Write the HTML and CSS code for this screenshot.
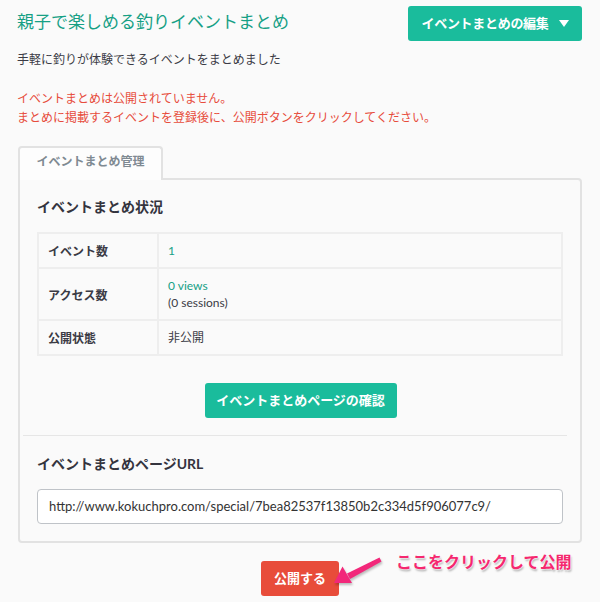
FILE: index.html
```html
<!DOCTYPE html>
<html lang="ja">
<head>
<meta charset="utf-8">
<title>親子で楽しめる釣りイベントまとめ</title>
<link rel="stylesheet" href="styles.css">
</head>
<body>
<div class="page">
  <header class="head">
    <h1 class="title">親子で楽しめる釣りイベントまとめ</h1>
    <button class="btn btn-green btn-edit">イベントまとめの編集<span class="caret"></span></button>
  </header>
  <p class="lead">手軽に釣りが体験できるイベントをまとめました</p>
  <p class="warn">イベントまとめは公開されていません。<br>まとめに掲載するイベントを登録後に、公開ボタンをクリックしてください。</p>

  <div class="tabs"><div class="tab">イベントまとめ管理</div></div>
  <section class="panel">
    <h2 class="sub">イベントまとめ状況</h2>
    <table class="stats">
      <tr class="r1"><th>イベント数</th><td><span class="num">1</span></td></tr>
      <tr class="r2"><th>アクセス数</th><td><span class="num">0 views</span><br>(0 sessions)</td></tr>
      <tr class="r1"><th>公開状態</th><td>非公開</td></tr>
    </table>
    <div class="center"><button class="btn btn-green btn-check">イベントまとめページの確認</button></div>
    <hr class="divider">
    <h2 class="sub sub-url">イベントまとめページURL</h2>
    <div class="url">http://www.kokuchpro.com/special/7bea82537f13850b2c334d5f906077c9/</div>
  </section>

  <div class="publish">
    <button class="btn btn-red">公開する</button>
    <svg class="arrow" width="60" height="40" viewBox="0 0 60 40">
      <g fill="#f2287a">
        <polygon points="49.5,8.5 51.5,12.5 20,30 17,24.5"/>
        <polygon points="4,34 12.5,17.5 22,34"/>
      </g>
    </svg>
    <span class="note">ここをクリックして公開</span>
  </div>
</div>
</body>
</html>
```

FILE: styles.css
```css
* { box-sizing: border-box; }
html, body { margin: 0; padding: 0; }
body {
  background: #fafafa;
  font-family: Lato, "Noto Sans CJK JP", sans-serif;
  color: #3b3b45;
  font-size: 12px;
}
.page { padding: 6px 18px 0 17px; }
.head {
  display: flex;
  justify-content: space-between;
  align-items: center;
}
.title {
  margin: 0;
  font-size: 17px;
  font-weight: 400;
  color: #16a085;
  line-height: 24px;
  margin-top: -3px;
}
.btn {
  border: 0;
  border-radius: 3px;
  font-family: Lato, "Noto Sans CJK JP", sans-serif;
  font-weight: 700;
  font-size: 13px;
  color: #fff;
  height: 35px;
  padding: 0 14px;
  line-height: 35px;
  cursor: pointer;
  white-space: nowrap;
}
.btn-green { background: #1abc9c; }
.btn-red { background: #e84c3a; padding: 0 13px; }
.btn-edit {
  display: flex;
  align-items: center;
  justify-content: center;
  width: 174px;
  padding: 0;
  letter-spacing: -0.3px;
}
.caret {
  display: inline-block;
  width: 0; height: 0;
  margin-left: 10px;
  border-left: 5.5px solid transparent;
  border-right: 5.5px solid transparent;
  border-top: 7px solid #fff;
}
.lead { margin: 10px 0 0; line-height: 18px; color: #3b3b45; }
.warn { margin: 20px 0 0; line-height: 19px; color: #e74c3c; }

.tabs { display: flex; margin-top: 19px; padding-left: 1px; }
.tab {
  position: relative;
  z-index: 1;
  width: 145px;
  padding: 5px 0 9px;
  text-align: center;
  line-height: 18px;
  font-weight: 700;
  color: #7f8a92;
  background: #fdfdfd;
  border: 2px solid #e2e2e2;
  border-bottom: 0;
  border-radius: 4px 4px 0 0;
  margin-bottom: -2px;
}
.panel {
  margin-left: 1px;
  border: 2px solid #e2e2e2;
  border-radius: 0 4px 4px 4px;
  padding: 17px 16px 17px 17px;
  background: #fafafa;
}
.sub {
  margin: 0;
  font-size: 14px;
  line-height: 20px;
  font-weight: 700;
  color: #34343e;
}
.stats {
  margin-top: 15px;
  width: 526px;
  border-collapse: collapse;
  border: 2px solid #eeeeee;
}
.stats th, .stats td {
  border: 2px solid #eeeeee;
  text-align: left;
  vertical-align: middle;
  padding: 0 9px;
  font-size: 12px;
}
.stats th { width: 120px; font-weight: 700; color: #3b3b45; }
.stats td { line-height: 17px; }
.stats .r1 { height: 35px; }
.stats .r2 { height: 52px; }
.num { color: #16a085; }
.center { display: flex; justify-content: center; margin-top: 27px; }
.btn-check { width: 192px; padding: 0; }
.divider {
  border: 0;
  border-top: 1px solid #e6e6e6;
  margin: 17px -3px 0 -14px;
}
.sub-url { margin-top: 18px; }
.url {
  margin-top: 15px;
  width: 526px;
  height: 35px;
  border: 1px solid #bfc3c8;
  border-radius: 4px;
  background: #fff;
  padding: 0 11px;
  line-height: 33px;
  font-size: 13px;
  color: #333;
  white-space: nowrap;
}
.publish {
  position: relative;
  display: flex;
  justify-content: center;
  margin-top: 18px;
  padding-left: 1px;
}
.arrow {
  position: absolute;
  left: 313px;
  top: -12px;
  filter: drop-shadow(1px 2px 1px rgba(0,0,0,0.25));
}
.note {
  position: absolute;
  left: 379px;
  top: -9px;
  font-size: 16px;
  line-height: 20px;
  font-weight: 700;
  color: #f5286f;
  text-shadow: 0 0 2px #fff, 0 0 2px #fff, 1px 2px 2px rgba(0,0,0,0.3);
  white-space: nowrap;
}
```
